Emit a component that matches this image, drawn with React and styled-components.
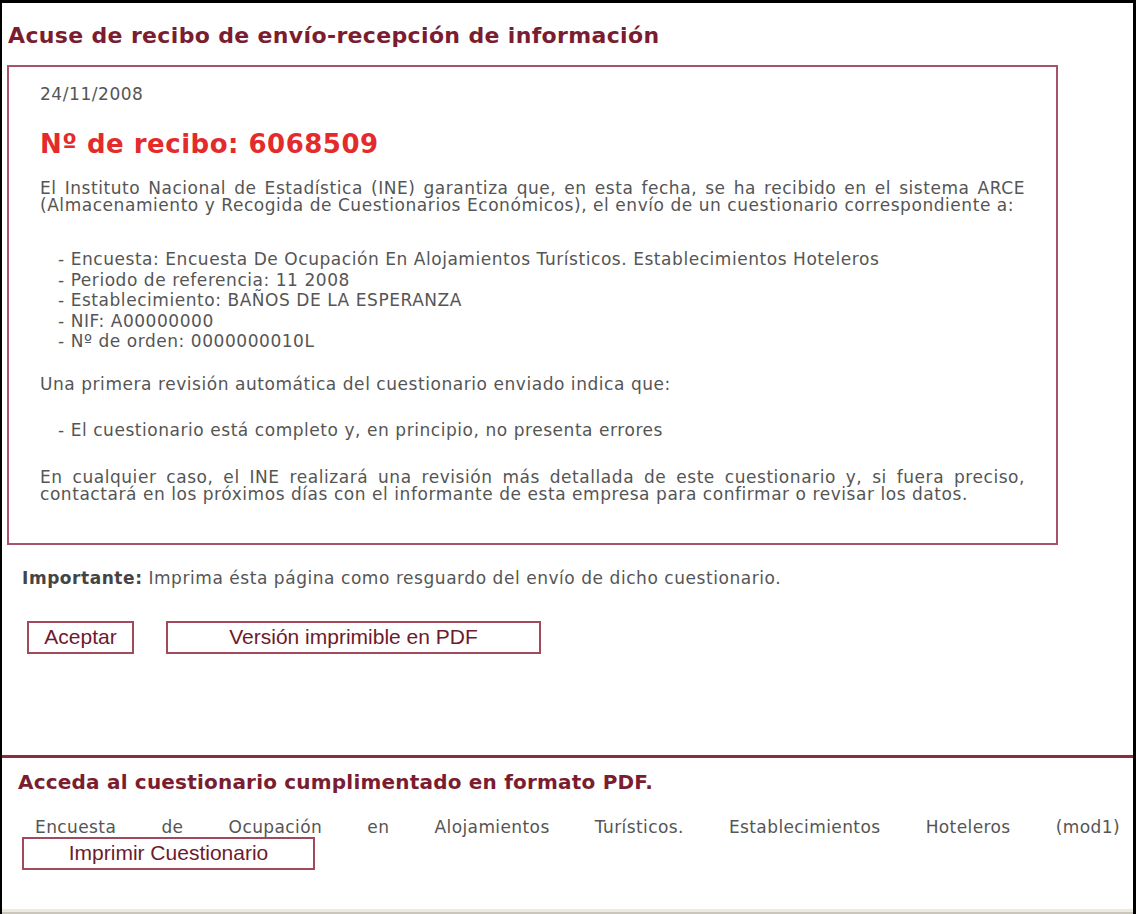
import React from "react";
import styled, { createGlobalStyle } from "styled-components";

const GlobalStyle = createGlobalStyle`
  html, body {
    margin: 0;
    padding: 0;
    background: #fff;
  }
  body {
    font-family: "DejaVu Sans", Verdana, sans-serif;
  }
`;

const datos = [
  "Encuesta: Encuesta De Ocupación En Alojamientos Turísticos. Establecimientos Hoteleros",
  "Periodo de referencia: 11 2008",
  "Establecimiento: BAÑOS DE LA ESPERANZA",
  "NIF: A00000000",
  "Nº de orden: 0000000010L",
];

const App = () => {
  return (
    <>
      <GlobalStyle />
      <Frame>
        <Title>Acuse de recibo de envío-recepción de información</Title>

        <Receipt>
          <DateLine>24/11/2008</DateLine>
          <ReceiptNumber>Nº de recibo: 6068509</ReceiptNumber>
          <Text>
            El Instituto Nacional de Estadística (INE) garantiza que, en esta
            fecha, se ha recibido en el sistema ARCE (Almacenamiento y Recogida
            de Cuestionarios Económicos), el envío de un cuestionario
            correspondiente a:
          </Text>
          <List $top={35}>
            {datos.map((d) => (
              <Item key={d}>- {d}</Item>
            ))}
          </List>
          <Text $top={24}>
            Una primera revisión automática del cuestionario enviado indica que:
          </Text>
          <List $top={27}>
            <Item>- El cuestionario está completo y, en principio, no presenta errores</Item>
          </List>
          <Text $top={29}>
            En cualquier caso, el INE realizará una revisión más detallada de
            este cuestionario y, si fuera preciso, contactará en los próximos
            días con el informante de esta empresa para confirmar o revisar los
            datos.
          </Text>
        </Receipt>

        <Notice>
          <strong>Importante:</strong> Imprima ésta página como resguardo del
          envío de dicho cuestionario.
        </Notice>

        <Actions>
          <Button $width={107}>Aceptar</Button>
          <Button $width={375}>Versión imprimible en PDF</Button>
        </Actions>

        <Divider />

        <SectionTitle>Acceda al cuestionario cumplimentado en formato PDF.</SectionTitle>
        <Survey>
          <SurveyName>
            Encuesta de Ocupación en Alojamientos Turísticos. Establecimientos
            Hoteleros (mod1)
          </SurveyName>
          <Button $width={293}>Imprimir Cuestionario</Button>
        </Survey>

        <StatusEdge />
      </Frame>
    </>
  );
};

export default App;

const Frame = styled.div`
  box-sizing: border-box;
  width: 1136px;
  height: 914px;
  border-left: 2px solid #000;
  border-top: 3px solid #000;
  border-right: 3px solid #000;
  display: flex;
  flex-direction: column;
  align-items: flex-start;
  overflow: hidden;
`;

const Title = styled.h1`
  margin: 20px 0 0 6px;
  font-size: 22px;
  line-height: 26px;
  letter-spacing: 0.35px;
  font-weight: bold;
  color: #7b1d31;
`;

const Receipt = styled.div`
  box-sizing: border-box;
  width: 1051px;
  margin: 16px 0 0 5px;
  padding: 19px 31px 40px 31px;
  border: 2px solid #a8536a;
  color: #555;
  font-size: 17px;
  letter-spacing: 0.55px;
`;

const DateLine = styled.div`
  line-height: 17px;
`;

const ReceiptNumber = styled.h2`
  margin: 26px 0 0 0;
  font-size: 26px;
  line-height: 30px;
  letter-spacing: 0.5px;
  font-weight: bold;
  color: #e42b2b;
`;

const Text = styled.p`
  margin: ${(p) => p.$top || 21}px 0 0 0;
  line-height: 17px;
  text-align: justify;
`;

const List = styled.div`
  margin-top: ${(p) => p.$top || 32}px;
  padding-left: 18px;
`;

const Item = styled.div`
  line-height: 20.5px;
`;

const Notice = styled.p`
  margin: 25px 0 0 20px;
  font-size: 17px;
  line-height: 17px;
  letter-spacing: 0.55px;
  color: #555;

  strong {
    color: #444;
  }
`;

const Actions = styled.div`
  display: flex;
  gap: 32px;
  margin: 34px 0 0 25px;
`;

const Button = styled.button`
  box-sizing: border-box;
  width: ${(p) => p.$width}px;
  height: 33px;
  padding: 0 0 1px 0;
  background: #fff;
  border: 2px solid #a3495c;
  color: #6e1a2c;
  font-family: "Liberation Sans", Arial, sans-serif;
  font-size: 21px;
  line-height: 24px;
  cursor: pointer;
`;

const Divider = styled.div`
  align-self: stretch;
  height: 3px;
  margin-top: 101px;
  background: #8a2b3e;
`;

const SectionTitle = styled.h3`
  margin: 12px 0 0 16px;
  font-size: 20px;
  line-height: 24px;
  letter-spacing: 0.2px;
  font-weight: bold;
  color: #7b1d31;
`;

const Survey = styled.div`
  align-self: stretch;
  margin-top: 25px;
  padding: 0 13px 0 20px;
`;

const SurveyName = styled.div`
  text-indent: 13px;
  text-align: justify;
  text-align-last: justify;
  font-size: 17px;
  line-height: 17px;
  letter-spacing: 0.4px;
  color: #555;
  margin-bottom: 1px;
`;

const StatusEdge = styled.div`
  align-self: stretch;
  margin-top: auto;
  height: 2px;
  border-top: 3px solid #eeeae0;
  background: #cac6bc;
`;
